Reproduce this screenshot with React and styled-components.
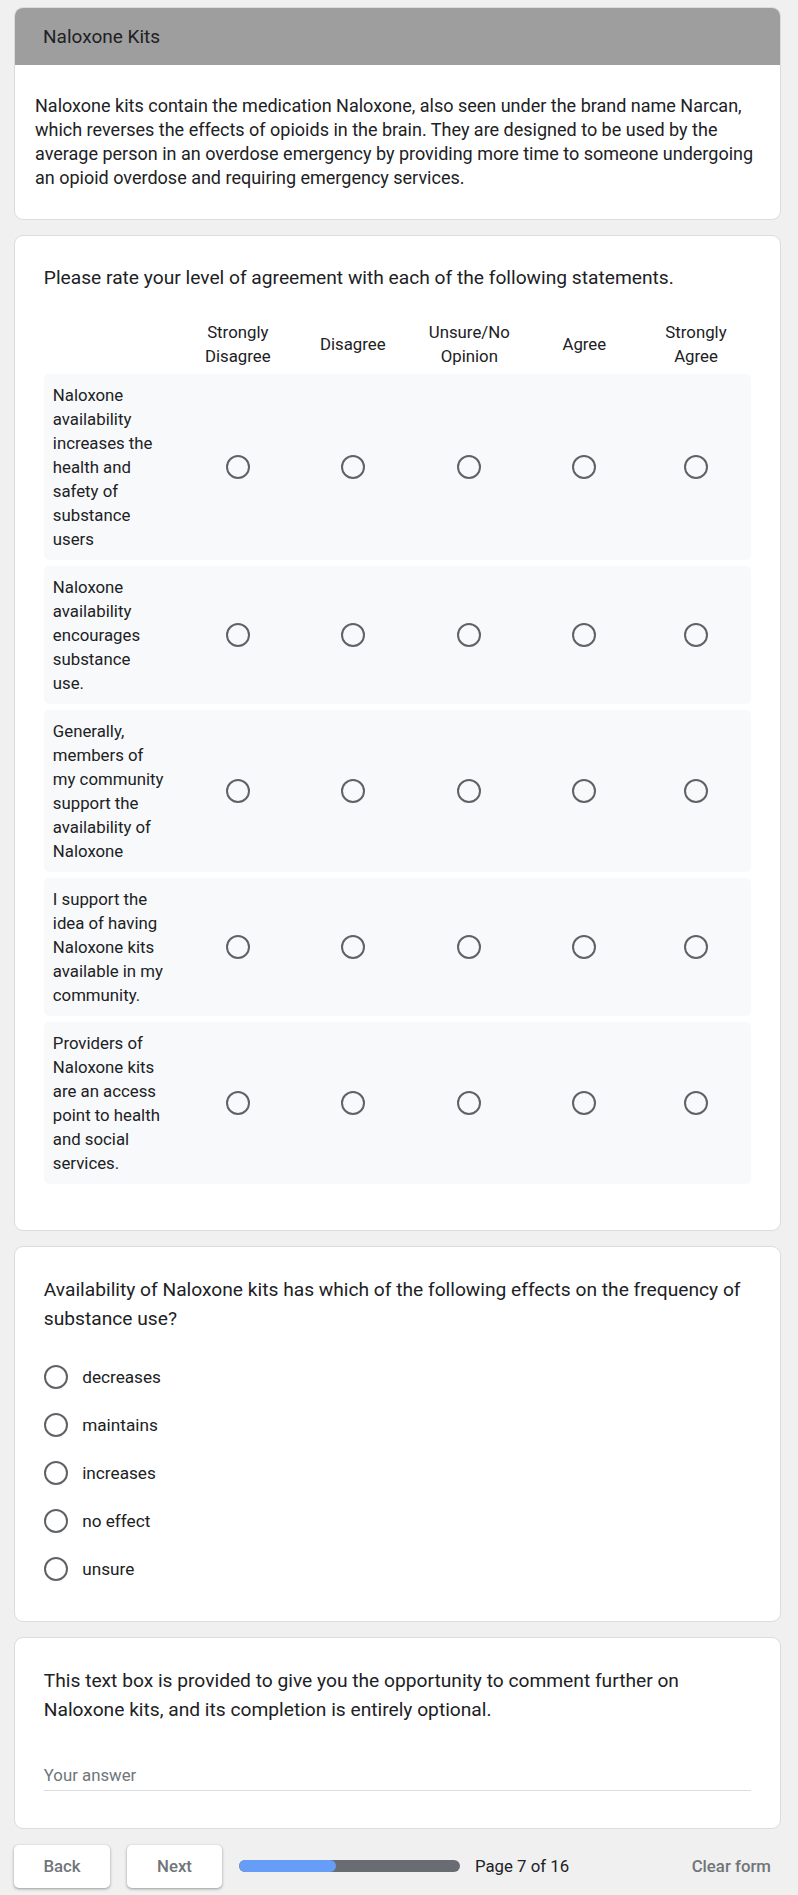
import React from 'react';
import styled, { createGlobalStyle } from 'styled-components';

const GlobalStyle = createGlobalStyle`
  body {
    margin: 0;
    background: #f0f0f0;
    font-family: Roboto, "Liberation Sans", Arial, sans-serif;
    color: #202124;
  }
`;

const Page = styled.main`
  display: flex;
  flex-direction: column;
  gap: 15px;
  padding: 7px 17px 10px 14px;
`;

const Card = styled.section`
  background: #fff;
  border: 1px solid #dadce0;
  border-radius: 9px;
  overflow: hidden;
  padding: ${(p) => p.$padding || '28.8px'};
`;

const SectionHead = styled.div`
  display: flex;
  align-items: center;
  height: 57px;
  padding: 0 28px;
  background: #9e9e9e;
  font-size: 19px;
  color: #202124;
`;

const Description = styled.p`
  margin: 0;
  padding: 28.8px 20px;
  font-size: 18px;
  line-height: 24px;
`;

const Question = styled.div`
  font-size: 19.2px;
  line-height: 28.8px;
`;

const Matrix = styled.div`
  display: grid;
  grid-template-columns: 137px 114px 116px 117px 113px 1fr;
  row-gap: 6px;
  margin-top: 27px;
`;

const MatrixRow = styled.div`
  display: contents;
`;

const HeadCell = styled.div`
  display: flex;
  align-items: center;
  justify-content: center;
  padding: 0 5px;
  text-align: center;
  font-size: 16.8px;
  line-height: 24px;
`;

const LabelCell = styled.div`
  background: #f8f9fa;
  border-radius: 5px 0 0 5px;
  padding: 9px 17px 9px 9px;
  font-size: 16.8px;
  line-height: 24px;
`;

const RadioCell = styled.div`
  display: flex;
  align-items: center;
  justify-content: center;
  background: #f8f9fa;
  border-radius: ${(p) => (p.$last ? '0 5px 5px 0' : '0')};
`;

const Radio = styled.span`
  display: inline-block;
  flex: none;
  width: 24px;
  height: 24px;
  box-sizing: border-box;
  border: 2.4px solid #5f6368;
  border-radius: 50%;
`;

const Options = styled.div`
  display: flex;
  flex-direction: column;
  margin-top: 19px;
`;

const Option = styled.label`
  display: flex;
  align-items: center;
  gap: 14.4px;
  height: 48px;
  font-size: 17.2px;
`;

const AnswerField = styled.div`
  margin: 29px 0 8px;
  padding: 9px 0 3px;
  border-bottom: 1px solid #dadce0;
  font-size: 16.8px;
  line-height: 24px;
  color: #70757a;
`;

const Footer = styled.nav`
  display: flex;
  align-items: center;
  margin-top: 1px;
`;

const NavButton = styled.button`
  width: ${(p) => p.$width}px;
  height: 43px;
  margin-right: 17px;
  border: none;
  border-radius: 5px;
  background: #fff;
  box-shadow: 0 1px 2px rgba(60, 64, 67, 0.3), 0 1px 3px 1px rgba(60, 64, 67, 0.15);
  font-family: Roboto, "Liberation Sans", Arial, sans-serif;
  font-size: 16.8px;
  font-weight: 500;
  color: #70757a;
`;

const Progress = styled.div`
  width: 221px;
  height: 12px;
  border-radius: 6px;
  background: #696c72;
  overflow: hidden;
`;

const ProgressFill = styled.div`
  height: 100%;
  border-radius: 6px;
  background: #669df6;
`;

const PageLabel = styled.span`
  margin-left: 15px;
  font-size: 16.8px;
  color: #202124;
`;

const ClearButton = styled.button`
  margin-left: auto;
  padding: 0 10px;
  height: 43px;
  border: none;
  background: transparent;
  font-family: Roboto, "Liberation Sans", Arial, sans-serif;
  font-size: 16.8px;
  font-weight: 500;
  color: #70757a;
`;

const columns = ['Strongly Disagree', 'Disagree', 'Unsure/No Opinion', 'Agree', 'Strongly Agree'];

const statements = [
  'Naloxone availability increases the health and safety of substance users',
  'Naloxone availability encourages substance use.',
  'Generally, members of my community support the availability of Naloxone',
  'I support the idea of having Naloxone kits available in my community.',
  'Providers of Naloxone kits are an access point to health and social services.',
];

const effects = ['decreases', 'maintains', 'increases', 'no effect', 'unsure'];

const App = () => {
  const page = 7;
  const total = 16;
  return (
    <>
      <GlobalStyle />
      <Page>
        <Card $padding="0">
          <SectionHead>Naloxone Kits</SectionHead>
          <Description>
            Naloxone kits contain the medication Naloxone, also seen under the brand name Narcan,
            which reverses the effects of opioids in the brain. They are designed to be used by the
            average person in an overdose emergency by providing more time to someone undergoing
            an opioid overdose and requiring emergency services.
          </Description>
        </Card>

        <Card $padding="28.8px 28.8px 46px">
          <Question>Please rate your level of agreement with each of the following statements.</Question>
          <Matrix>
            <MatrixRow>
              <div />
              {columns.map((c) => (
                <HeadCell key={c}>{c}</HeadCell>
              ))}
            </MatrixRow>
            {statements.map((s) => (
              <MatrixRow key={s}>
                <LabelCell>{s}</LabelCell>
                {columns.map((c, i) => (
                  <RadioCell key={c} $last={i === columns.length - 1}>
                    <Radio />
                  </RadioCell>
                ))}
              </MatrixRow>
            ))}
          </Matrix>
        </Card>

        <Card>
          <Question>
            Availability of Naloxone kits has which of the following effects on the frequency of
            substance use?
          </Question>
          <Options>
            {effects.map((e) => (
              <Option key={e}>
                <Radio />
                {e}
              </Option>
            ))}
          </Options>
        </Card>

        <Card>
          <Question>
            This text box is provided to give you the opportunity to comment further on Naloxone
            kits, and its completion is entirely optional.
          </Question>
          <AnswerField>Your answer</AnswerField>
        </Card>

        <Footer>
          <NavButton $width={96}>Back</NavButton>
          <NavButton $width={95}>Next</NavButton>
          <Progress>
            <ProgressFill style={{ width: `${(page / total) * 100}%` }} />
          </Progress>
          <PageLabel>
            Page {page} of {total}
          </PageLabel>
          <ClearButton>Clear form</ClearButton>
        </Footer>
      </Page>
    </>
  );
};

export default App;
